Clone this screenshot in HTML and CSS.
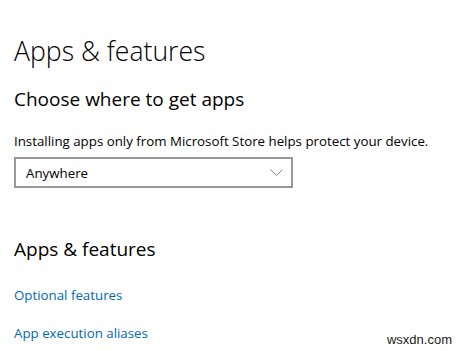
FILE: index.html
```html
<!DOCTYPE html>
<html>
<head>
<meta charset="utf-8">
<link rel="stylesheet" href="styles.css">
</head>
<body>
<main class="page">
  <h1 class="title">Apps &amp; features</h1>
  <h2 class="subtitle">Choose where to get apps</h2>
  <p class="desc">Installing apps only from Microsoft Store helps protect your device.</p>
  <div class="select">
    <span class="select-value">Anywhere</span>
    <svg class="chev" width="13" height="7" viewBox="0 0 13 7"><path d="M0.5 0.5 L6.5 6.5 L12.5 0.5" fill="none" stroke="#8a8a8a" stroke-width="1"/></svg>
  </div>
  <h2 class="section">Apps &amp; features</h2>
  <a class="link link-first" href="#">Optional features</a>
  <a class="link" href="#">App execution aliases</a>
</main>
<div class="watermark">wsxdn.com</div>
</body>
</html>
```
FILE: styles.css
```css
html, body {
  margin: 0;
  padding: 0;
  background: #ffffff;
}
body {
  width: 464px;
  height: 351px;
  overflow: hidden;
  position: relative;
  font-family: "Open Sans", "Noto Sans", sans-serif;
  color: #000000;
}
.page {
  padding: 0 0 0 14px;
  display: flex;
  flex-direction: column;
  align-items: flex-start;
}
.title {
  margin: 33px 0 0 0;
  font-size: 26.6px;
  font-weight: 300;
  line-height: 36px;
}
.subtitle {
  margin: 17px 0 0 0;
  font-size: 19px;
  font-weight: 400;
  line-height: 26px;
}
.desc {
  margin: 20px 0 0 0;
  font-size: 13.3px;
  line-height: 18px;
}
.select {
  margin-top: 7px;
  box-sizing: border-box;
  width: 279px;
  height: 31px;
  border: 2px solid #999999;
  display: flex;
  align-items: center;
  justify-content: space-between;
  padding: 0 8px 0 10px;
}
.select-value {
  font-size: 13.3px;
}
.section {
  margin: 48px 0 0 0;
  font-size: 19px;
  font-weight: 400;
  line-height: 26px;
}
.link {
  color: #0067b8;
  text-decoration: none;
  font-size: 13.3px;
  line-height: 18px;
  margin-top: 20px;
}
.link-first {
  margin-top: 24px;
}
.watermark {
  position: absolute;
  right: 12px;
  bottom: 4px;
  font-family: "Liberation Sans", Arial, sans-serif;
  font-size: 13px;
  color: #222222;
}
```
